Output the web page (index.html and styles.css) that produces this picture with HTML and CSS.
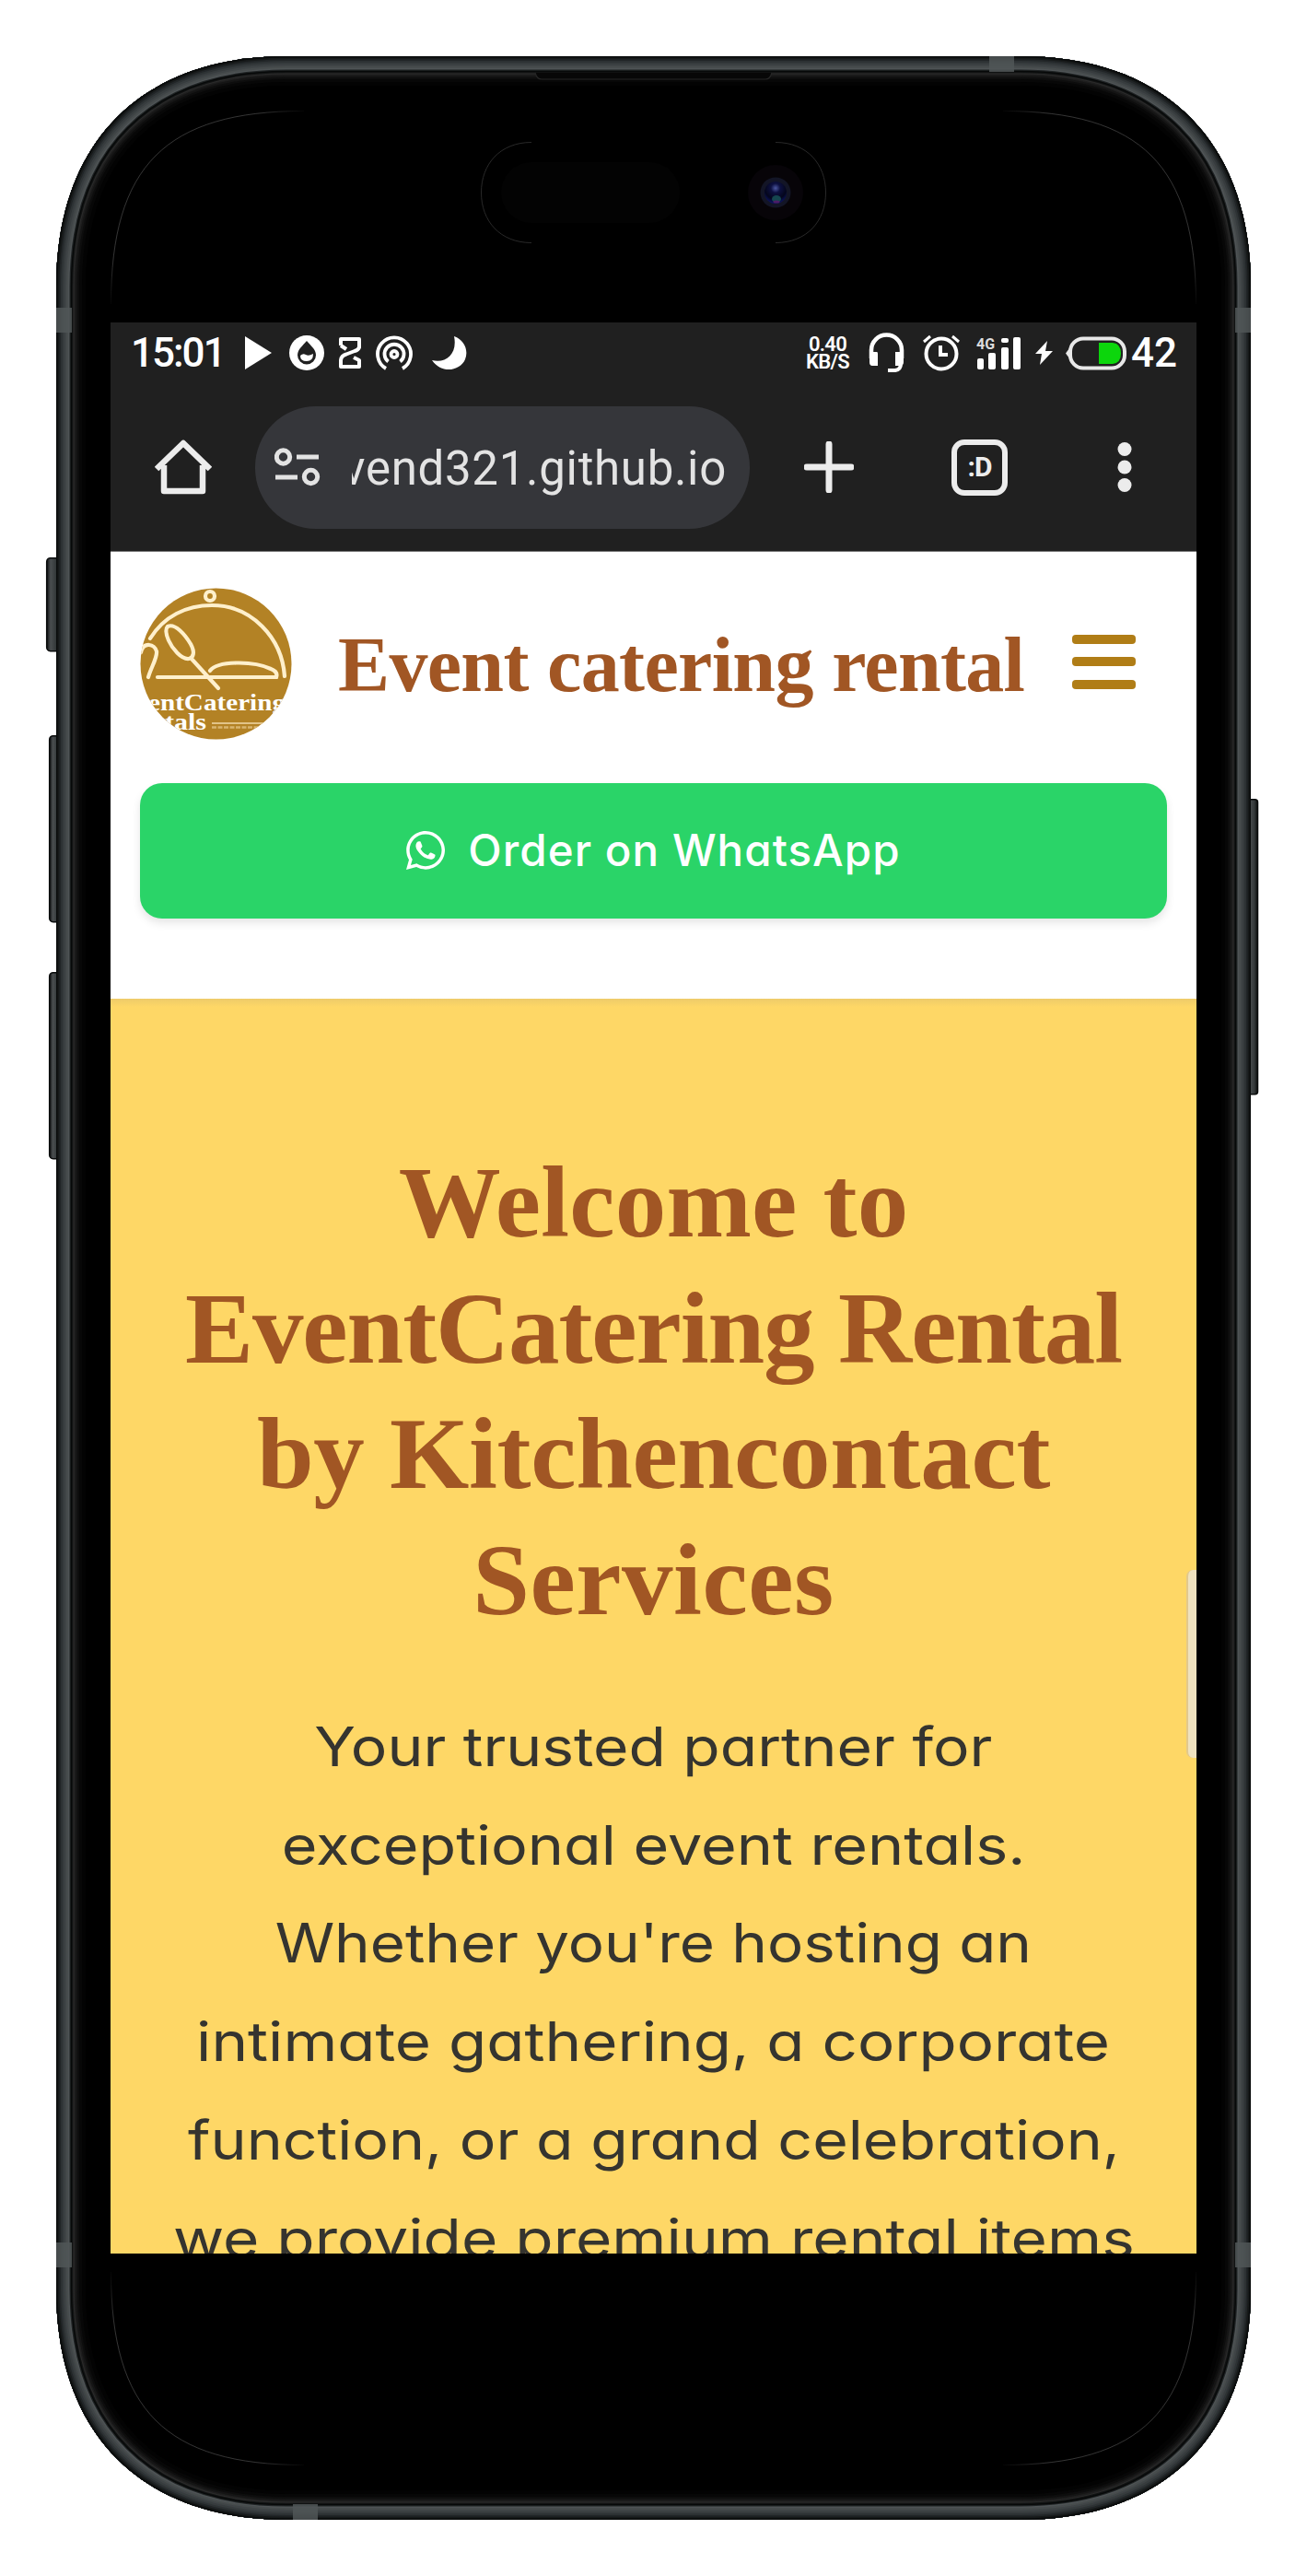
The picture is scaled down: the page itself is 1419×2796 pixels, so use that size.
FILE: index.html
```html
<!DOCTYPE html>
<html lang="en">
<head>
<meta charset="utf-8">
<title>Event catering rental</title>
<link rel="stylesheet" href="styles.css">
</head>
<body>
<div class="device">
  <svg class="device-body" viewBox="0 0 1419 2796" aria-hidden="true">
    <defs>
      <path id="body" d="M61 311C61 154 154 61 311 61H1108C1265 61 1358 154 1358 311V2485C1358 2642 1265 2735 1108 2735H311C154 2735 61 2642 61 2485Z"/>
      <clipPath id="bodyClip"><use href="#body"/></clipPath>
      <linearGradient id="key" x1="0" x2="1" y1="0" y2="0">
        <stop offset="0" stop-color="#0d0f10"/><stop offset=".3" stop-color="#4a4e50"/><stop offset=".7" stop-color="#34393a"/><stop offset="1" stop-color="#0b0d0d"/>
      </linearGradient>
      <radialGradient id="lens" cx=".5" cy=".3" r=".7">
        <stop offset="0" stop-color="#4c57a0"/><stop offset=".3" stop-color="#0d1040"/><stop offset=".7" stop-color="#04061c"/><stop offset="1" stop-color="#0c1468"/>
      </radialGradient>
      <radialGradient id="corner" gradientUnits="userSpaceOnUse" cx="120" cy="120" r="215">
        <stop offset=".2" stop-color="#424242"/><stop offset=".75" stop-color="#424242"/><stop offset="1" stop-color="#000"/>
      </radialGradient>
      <path id="hair" d="M120.500 330C120.500 180 180 120.500 330 120.500"/>
    </defs>
    <g fill="url(#key)" stroke="#0a0c0c" stroke-width="1.500">
      <rect x="50.700" y="605.700" width="14" height="101" rx="4"/>
      <rect x="53.700" y="798.700" width="12" height="202" rx="4"/>
      <rect x="53.700" y="1055.700" width="12" height="202" rx="4"/>
      <rect x="1353" y="867.700" width="12.500" height="320" rx="3"/>
    </g>
    <use href="#body" fill="#000"/>
    <g clip-path="url(#bodyClip)" fill="none">
      <use href="#body" stroke="#030303" stroke-width="64"/>
      <use href="#body" stroke="#070707" stroke-width="56"/>
      <use href="#body" stroke="#0d0d0d" stroke-width="50"/>
      <use href="#body" stroke="#151515" stroke-width="46"/>
      <use href="#body" stroke="#1e1e1e" stroke-width="42"/>
      <use href="#body" stroke="#292929" stroke-width="39"/>
      <use href="#body" stroke="#101212" stroke-width="36.500"/>
      <use href="#body" stroke="#070909" stroke-width="34"/>
      <use href="#body" stroke="#202425" stroke-width="31.500"/>
      <use href="#body" stroke="#4f5456" stroke-width="29"/>
      <use href="#body" stroke="#474c4d" stroke-width="26"/>
      <use href="#body" stroke="#3f4446" stroke-width="22"/>
      <use href="#body" stroke="#373c3e" stroke-width="18"/>
      <use href="#body" stroke="#2d3234" stroke-width="14"/>
      <use href="#body" stroke="#212527" stroke-width="10"/>
      <use href="#body" stroke="#161919" stroke-width="6.500"/>
      <use href="#body" stroke="#0a0c0c" stroke-width="3"/>
      <g fill="#505657" fill-opacity=".85">
        <path d="M61 334h17v27H61zM1341 334h17v27h-17zM61 2434h17v27H61zM1341 2434h17v27h-17zM1074 61h27v17h-27zM318 2718h27v17h-27z"/>
      </g>
    </g>
    <path d="M581 79Q583 86 588 86H831Q836 86 838 79" fill="#070707" stroke="#262626" stroke-width="1.200"/>
    <g fill="none" stroke="url(#corner)" stroke-width=".8">
      <use href="#hair"/>
      <use href="#hair" transform="matrix(-1 0 0 1 1419 0)"/>
      <use href="#hair" transform="matrix(1 0 0 -1 0 2796)"/>
      <use href="#hair" transform="matrix(-1 0 0 -1 1419 2796)"/>
    </g>
    <path d="M577 154.500C543 154.500 522.500 178 522.500 209S543 263.500 577 263.500M842 154.500C876 154.500 896.500 178 896.500 209S876 263.500 842 263.500" fill="none" stroke="#333" stroke-width=".8"/>
    <rect x="544" y="176" width="194" height="66" rx="33" fill="#030303"/>
    <circle cx="842" cy="209" r="30" fill="#070408"/>
    <circle cx="842" cy="209" r="16.500" fill="#131526"/>
    <circle cx="842" cy="209" r="12" fill="url(#lens)"/>
    <ellipse cx="843" cy="216" rx="5" ry="4" fill="#15464f"/>
    <ellipse cx="843" cy="219" rx="3.500" ry="1.500" fill="#4c1d66"/>
  </svg>

  <main class="screen">
    <div class="statusbar">
      <div class="status-left">
        <span class="clock time">15:01</span>
        <svg class="ic-play" width="29" height="38" viewBox="0 0 29 38"><path d="M0 1L29 19L0 37Z" fill="#fff"/></svg>
        <svg class="ic-flame" width="38" height="38" viewBox="0 0 38 38"><circle cx="19" cy="19" r="19" fill="#fff"/><path d="M19 6C23 11 29 15 29 21.500A10 10 0 0 1 9 21.500C9 15 15 11 19 6Z" fill="#202020"/><path d="M12 22Q15 19 18 21T26 20Q26 28 19 28T12 22Z" fill="#fff"/></svg>
        <svg class="ic-glass" width="24" height="34" viewBox="0 0 24 34"><path d="M2 9V2H22V11Q21 14 17 15L8 18.500Q2.500 20 2 25V32H22V25L16 22M2 9L8 13" fill="none" stroke="#fff" stroke-width="4" stroke-linejoin="round"/></svg>
        <svg class="ic-cast" width="40" height="38" viewBox="0 0 40 38"><g fill="none" stroke="#fff" stroke-width="3.800"><path d="M11 36A18 18 0 1 1 29 36"/><path d="M13.500 28.500A10.500 10.500 0 1 1 26.500 28.500"/><circle cx="20" cy="20.500" r="3.500"/></g></svg>
        <svg class="ic-moon" width="38" height="38" viewBox="0 0 38 38"><path d="M24 1C35 5 40 16 36 26C31 38 11 43 0 27C15 31 28 20 24 1Z" fill="#fff"/></svg>
      </div>
      <div class="status-right">
        <span class="speed"><b>0.40</b><b>KB/S</b></span>
        <svg class="ic-head" width="39" height="44" viewBox="0 0 39 44"><path d="M3 28V19A16.500 16.500 0 0 1 36 19V28" fill="none" stroke="#fff" stroke-width="4.500"/><path d="M1 21H9Q10 21 10 23V36H4Q1 36 1 32ZM29 21H38V32Q38 36 34 36H29Z" fill="#fff"/><path d="M35 34Q35 40 29 41H21" fill="none" stroke="#fff" stroke-width="4"/></svg>
        <svg class="ic-alarm" width="40" height="40" viewBox="0 0 40 40"><circle cx="20" cy="21" r="16.500" fill="none" stroke="#fff" stroke-width="4"/><path d="M19 12V22H27" fill="none" stroke="#fff" stroke-width="4"/><path d="M1 8L8 2M39 8L32 2" stroke="#fff" stroke-width="3"/></svg>
        <svg class="ic-signal" width="48" height="37" viewBox="0 0 48 37"><g fill="#fff"><rect x="1" y="24" width="7" height="12" rx="2"/><rect x="13" y="18" width="8" height="18" rx="2"/><rect x="27" y="12" width="8" height="24" rx="2"/><rect x="27" y="2" width="8" height="5" rx="2"/><rect x="40" y="1" width="8" height="35" rx="2"/></g><text x="0" y="14" class="net">4G</text></svg>
        <svg class="ic-bolt" width="19" height="26" viewBox="0 0 19 26"><path d="M13 0L0 14H7L5 26L19 11H11Z" fill="#fff"/></svg>
        <svg class="ic-batt" width="67" height="37" viewBox="0 0 67 37"><rect x="5" y="2.500" width="59" height="32" rx="14" fill="none" stroke="#e8e8e8" stroke-width="4"/><path d="M4 13L0 18.500L4 24Z" fill="#e8e8e8"/><path d="M36 7H51Q60 8 60 18.500T51 30H36Z" fill="#0cd60c"/></svg>
        <span class="clock">42</span>
      </div>
    </div>

    <div class="toolbar">
      <svg class="ic-home" width="62" height="62" viewBox="0 0 62 62"><path d="M2 33L31 5L60 33M10 29V57H52V29" fill="none" stroke="#ececec" stroke-width="6.500" stroke-linejoin="round"/></svg>
      <div class="omnibox">
        <svg width="50" height="42" viewBox="0 0 50 42"><g fill="none" stroke="#e3e3e3" stroke-width="5"><circle cx="9.500" cy="10" r="7.200"/><path d="M24 10H48M1 32H25"/><circle cx="39.500" cy="31.500" r="7.200"/></g></svg>
        <div class="url"><span>vend321.github.io</span></div>
      </div>
      <svg class="ic-plus" width="54" height="56" viewBox="0 0 54 56"><path d="M3 28H51M27 3V53" stroke="#ececec" stroke-width="7" stroke-linecap="round"/></svg>
      <div class="tabs"><span>:D</span></div>
      <svg class="ic-more" width="16" height="56" viewBox="0 0 16 56"><g fill="#ececec"><circle cx="8" cy="8.500" r="7.500"/><circle cx="8" cy="28" r="7.500"/><circle cx="8" cy="47.500" r="7.500"/></g></svg>
    </div>

    <header class="site-header">
      <div class="brand-row">
        <svg class="logo" width="165" height="165" viewBox="0 0 165 165">
          <defs><clipPath id="disc"><circle cx="82.500" cy="82.500" r="82"/></clipPath></defs>
          <g clip-path="url(#disc)">
            <rect width="165" height="165" fill="#b38225"/>
            <g fill="none" stroke="#fff0cc" stroke-width="4.200" stroke-linecap="round">
              <circle cx="76" cy="9" r="5"/>
              <path d="M11 55C26 31 50 19 78 19C121 19 154 54 157 96"/>
              <path d="M19 97H148Q150 91 142 88C123 79 84 79 76 90"/>
              <path d="M30 42C38 38 49 51 55 61C60 70 58 76 53 77C45 78 35 66 31 57C28 50 27 45 30 42ZM55 76L85 109"/>
              <path d="M1 70C4 58 16 61 18 69C19 76 12 86 9 97"/>
            </g>
            <text x="9" y="133" class="logo-text" textLength="149" lengthAdjust="spacingAndGlyphs">entCatering</text>
            <text x="27" y="154" class="logo-text" textLength="45" lengthAdjust="spacingAndGlyphs">tals</text>
            <path d="M78 147H134" stroke="#f0d9a8" stroke-width="1.500"/>
            <path d="M78 151.500H134" stroke="#d9b570" stroke-width="2.500" stroke-dasharray="5 1.500"/>
          </g>
        </svg>
        <h2 class="brand">Event catering rental</h2>
        <div class="burger"><i></i><i></i><i></i></div>
      </div>
      <a class="order">
        <svg width="42" height="42" viewBox="0 0 448 448"><path fill="#fff" d="M381 65C339 23 283 0 224 0C102 0 2 100 2 222c0 39 10 77 30 111L0 448l118-31c32 18 69 27 106 27 122 0 224-100 224-222 0-59-25-115-67-157zM224 407c-33 0-66-9-94-26l-7-4-70 18 19-68-5-7C49 291 39 257 39 222 39 120 122 37 224 37c49 0 96 19 131 54 35 35 56 82 56 131 0 102-85 185-187 185zm101-138c-6-3-33-16-38-18s-9-3-12 3c-4 5-15 18-18 22-3 3-7 4-12 1-33-16-54-29-76-67-6-10 6-9 16-30 2-4 1-7 0-10s-12-30-17-41c-4-11-9-9-12-10h-11c-4 0-10 2-15 7-5 6-19 19-19 46s20 53 22 57c3 4 39 60 95 84 35 15 49 16 67 14 10-2 32-14 37-27s5-24 3-26c-1-3-5-4-10-5z"/></svg>
        <span>Order on WhatsApp</span>
      </a>
    </header>

    <section class="hero">
      <h1>
        <span class="l1">Welcome to</span>
        <span class="l2">EventCatering Rental</span>
        <span class="l3">by Kitchencontact</span>
        <span class="l4">Services</span>
      </h1>
      <p>
        <span class="p1">Your trusted partner for</span>
        <span class="p2">exceptional event rentals.</span>
        <span class="p3">Whether you're hosting an</span>
        <span class="p4">intimate gathering, a corporate</span>
        <span class="p5">function, or a grand celebration,</span>
        <span class="p6">we provide premium rental items</span>
      </p>
      <div class="edge-handle"></div>
    </section>
  </main>
</div>
</body>
</html>
```
FILE: styles.css
```css
* { box-sizing: border-box; }
body { margin: 0; background: #fff; }
svg { display: block; flex: none; }

.device { display: grid; width: 1419px; height: 2796px; }
.device-body, .screen { grid-area: 1 / 1; }
.device-body { width: 1419px; height: 2796px; }

.screen {
  display: flex;
  flex-direction: column;
  width: 1179px;
  height: 2096px;
  margin: 350px 0 0 120px;
  overflow: hidden;
  background: #fff;
}

/* Android status bar */
.statusbar {
  display: flex;
  justify-content: space-between;
  height: 66px;
  padding: 0 21px 0 22px;
  background: #202020;
  color: #fff;
  font-family: Roboto, sans-serif;
}
.status-left, .status-right { display: flex; align-items: center; height: 66px; }
.clock { font-size: 44px; font-weight: 500; line-height: 66px; }
.time { width: 103px; letter-spacing: -2px; white-space: nowrap; }
.ic-play { margin-left: 21px; }
.ic-flame { margin-left: 19px; }
.ic-glass { margin-left: 16px; }
.ic-cast { margin-left: 16px; }
.ic-moon { margin-left: 21px; }
.speed { display: grid; text-align: center; font-size: 22px; line-height: 19px; letter-spacing: -0.7px; }
.speed b { font-weight: 600; }
.ic-head { margin-left: 21px; }
.ic-alarm { margin-left: 20px; }
.ic-signal { margin-left: 18px; }
.ic-bolt { margin-left: 16px; }
.ic-batt { margin: 0 4px 0 14px; }
.net { fill: #ddd; font: 700 16px Roboto, sans-serif; }

/* Browser toolbar */
.toolbar {
  display: flex;
  align-items: center;
  height: 183px;
  padding-left: 48px;
  border-bottom: 1px solid #777;
  background: #202020;
}
.omnibox {
  display: flex;
  align-items: center;
  width: 537px;
  height: 133px;
  margin: 0 59px 0 47px;
  padding-left: 21px;
  border-radius: 66px;
  background: #35363a;
}
/* Long hosts stay right-aligned, so the start of the name is clipped */
.url {
  display: flex;
  justify-content: flex-end;
  width: 407px;
  margin-left: 34px;
  padding-top: 4px;
  overflow: hidden;
  color: #e3e3e3;
  font: 51px/66px Roboto, sans-serif;
  letter-spacing: 0.7px;
}
.tabs {
  display: grid;
  place-items: center;
  width: 61px;
  height: 61px;
  margin: 0 119px 0 106px;
  border: 6px solid #ececec;
  border-radius: 14px;
  color: #ececec;
  font: 700 30px/40px Roboto, sans-serif;
  letter-spacing: -1px;
}

/* Site header */
.site-header { height: 485px; padding: 39px 32px 0; }
.brand-row { display: flex; align-items: center; height: 165px; }
.logo-text { fill: #fff; font: 700 26px "Liberation Serif", serif; }
.brand {
  flex: none;
  width: 748px;
  margin: 2px 49px 0 50px;
  color: #a15624;
  font: 700 84px/100px "Liberation Serif", serif;
  letter-spacing: -0.65px;
  white-space: nowrap;
}
.burger { display: grid; gap: 14.5px; width: 69px; margin-bottom: 5px; }
.burger i { height: 10px; border-radius: 4px; background: #b07d16; }
.order {
  display: flex;
  align-items: center;
  justify-content: center;
  gap: 25px;
  height: 147px;
  margin-top: 47px;
  padding-bottom: 2px;
  border-radius: 24px;
  background: #2ad468;
  box-shadow: 0 5px 10px rgba(0, 0, 0, .1);
  color: #fff;
  font: 500 47.5px/60px Inter, sans-serif;
  font-feature-settings: "cv11";
  letter-spacing: 1.05px;
}

/* Hero */
.hero {
  position: relative;
  flex: 1;
  min-height: 0;
  padding-top: 153px;
  background: linear-gradient(#eecb6a, #fed766 9px);
  text-align: center;
  white-space: nowrap;
}
.hero h1, .hero p { display: flex; flex-direction: column; align-items: center; margin: 0; }
.hero h1 { color: #a15624; font: 700 111px/136.5px "Liberation Serif", serif; }
.l1 { letter-spacing: 0.2px; }
.l2 { letter-spacing: -1.1px; }
.l3 { letter-spacing: -0.3px; }
.l4 { letter-spacing: 0.5px; }
.hero p {
  margin-top: 60px;
  color: #35342f;
  font: 400 59px/106.7px Inter, sans-serif;
  font-feature-settings: "cv11";
}
/* Body copy is set wide; each line is stretched to its own measure */
.p1 { transform: scaleX(1.118); }
.p2 { transform: scaleX(1.126); }
.p3 { transform: scaleX(1.109); }
.p4 { transform: scaleX(1.14); }
.p5 { transform: scaleX(1.122); }
.p6 { transform: scaleX(1.145); }
.edge-handle {
  position: absolute;
  top: 620px;
  right: 0;
  width: 11px;
  height: 204px;
  border-left: 2px solid #e2c88c;
  border-radius: 7px 0 0 7px;
  background: #efe2bf;
}
```
